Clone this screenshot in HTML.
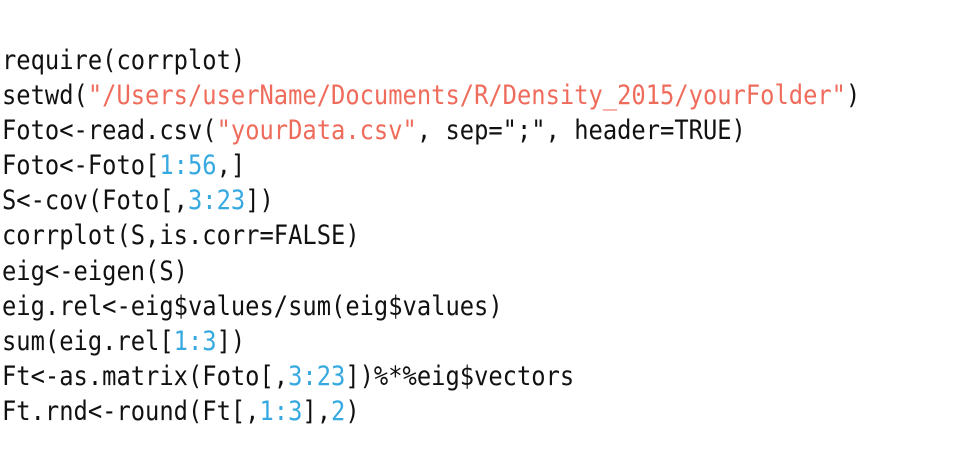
<!DOCTYPE html>
<html><head><meta charset="utf-8"><style>
html,body{margin:0;padding:0;background:#fff;width:969px;height:473px;overflow:hidden}
pre{margin:0;position:absolute;left:2px;top:43px;font-family:"DejaVu Sans Mono","Liberation Mono",monospace;font-size:27px;line-height:35.1px;color:#111;transform:scaleX(0.88);transform-origin:0 0}
.s{color:#ef6b5b}.n{color:#36a9e1}
</style></head><body><pre>require(corrplot)
setwd(<span class="s">"/Users/userName/Documents/R/Density_2015/yourFolder"</span>)
Foto&lt;-read.csv(<span class="s">"yourData.csv"</span>, sep=";", header=TRUE)
Foto&lt;-Foto[<span class="n">1:56</span>,]
S&lt;-cov(Foto[,<span class="n">3:23</span>])
corrplot(S,is.corr=FALSE)
eig&lt;-eigen(S)
eig.rel&lt;-eig$values/sum(eig$values)
sum(eig.rel[<span class="n">1:3</span>])
Ft&lt;-as.matrix(Foto[,<span class="n">3:23</span>])%*%eig$vectors
Ft.rnd&lt;-round(Ft[,<span class="n">1:3</span>],<span class="n">2</span>)</pre></body></html>
